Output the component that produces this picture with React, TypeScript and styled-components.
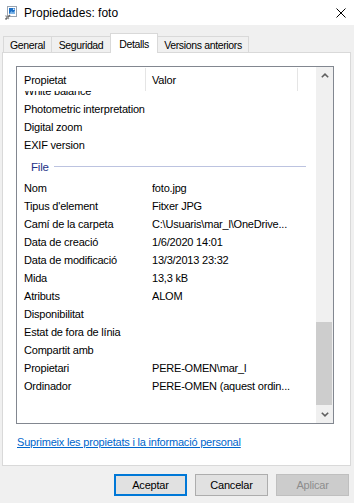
import React from 'react'
import styled, { createGlobalStyle } from 'styled-components'

const GlobalStyle = createGlobalStyle`
  html, body {
    margin: 0;
    padding: 0;
    background: #f0f0f0;
  }
  body {
    font-family: "Liberation Sans", Arial, sans-serif;
    font-size: 11px;
    letter-spacing: -0.2px;
    color: #000;
  }
`

const Window = styled.div`
  width: 354px;
  height: 503px;
  display: flex;
  flex-direction: column;
  overflow: hidden;
  background: #f0f0f0;
`

const TitleBar = styled.div`
  height: 25px;
  background: #fff;
  display: flex;
  align-items: center;
  padding-left: 5px;
`

const Title = styled.span`
  flex: 1;
  font-size: 12px;
  letter-spacing: 0;
  margin-left: 7px;
`

const CloseIcon = styled.svg`
  margin-right: 8px;
`

const Body = styled.div`
  flex: 1;
  display: flex;
  flex-direction: column;
  padding: 8px 3px 0 2px;
`

const TabStrip = styled.div`
  display: flex;
  align-items: flex-end;
  height: 20px;
  padding-left: 1px;
  position: relative;
  z-index: 1;
  margin-bottom: -1px;
`

const Tab = styled.div<{ $w: number; $active?: boolean }>`
  box-sizing: border-box;
  width: ${(p) => p.$w}px;
  height: ${(p) => (p.$active ? 20 : 17)}px;
  margin-left: -1px;
  border: 1px solid #d9d9d9;
  border-bottom: ${(p) => (p.$active ? 'none' : '1px solid #d9d9d9')};
  background: ${(p) => (p.$active ? '#fff' : '#f0f0f0')};
  display: flex;
  align-items: center;
  justify-content: center;
  padding-top: ${(p) => (p.$active ? 0 : 1)}px;
  font-size: 10.5px;
  letter-spacing: -0.35px;
  &:first-child {
    margin-left: 0;
  }
`

const Panel = styled.div`
  box-sizing: border-box;
  height: 414px;
  border: 1px solid #d9d9d9;
  background: #fff;
  padding: 13px 0 0 13px;
  display: flex;
  flex-direction: column;
`

const ListView = styled.div`
  box-sizing: border-box;
  width: 318px;
  height: 358px;
  border: 1px solid #828790;
  display: flex;
  background: #fff;
`

const ListMain = styled.div`
  flex: 1;
  display: flex;
  flex-direction: column;
  overflow: hidden;
`

const Header = styled.div`
  height: 24px;
  display: flex;
  flex-shrink: 0;
  background: #fff;
`

const HeaderCell = styled.div<{ $w?: number; $pad: number }>`
  box-sizing: border-box;
  ${(p) => (p.$w ? `width: ${p.$w}px;` : 'flex: 1;')}
  padding-left: ${(p) => p.$pad}px;
  display: flex;
  align-items: center;
  border-right: ${(p) => (p.$w ? '1px solid #e5e5e5' : 'none')};
  margin: 1px 0 0;
`

const Rows = styled.div`
  flex: 1;
  overflow: hidden;
`

const RowsInner = styled.div`
  margin-top: -9px;
`

const Row = styled.div`
  height: 18px;
  display: flex;
  align-items: center;
  white-space: nowrap;
`

const NameCell = styled.div`
  box-sizing: border-box;
  width: 135px;
  padding-left: 7px;
  flex-shrink: 0;
`

const ValueCell = styled.div`
  flex: 1;
  overflow: hidden;
`

const GroupRow = styled.div`
  height: 25px;
  display: flex;
  align-items: center;
  padding-left: 14px;
  padding-right: 10px;
  color: #1e3287;
  font-size: 11.5px;
`

const GroupLine = styled.div`
  flex: 1;
  height: 1px;
  margin-left: 5px;
  background: #bcc3e0;
`

const ScrollBar = styled.div`
  width: 17px;
  background: #f0f0f0;
  display: flex;
  flex-direction: column;
`

const ArrowButton = styled.div`
  height: 17px;
  display: flex;
  align-items: center;
  justify-content: center;
  flex-shrink: 0;
`

const Track = styled.div`
  flex: 1;
  display: flex;
  flex-direction: column;
  justify-content: flex-end;
  padding-bottom: 1px;
`

const Thumb = styled.div`
  height: 83px;
  margin: 0 1px 0 0;
  background: #cdcdcd;
`

const Link = styled.a`
  margin-top: 12px;
  margin-left: 1px;
  color: #0066cc;
  text-decoration: underline;
  cursor: pointer;
  align-self: flex-start;
`

const Footer = styled.div`
  display: flex;
  justify-content: flex-end;
  gap: 8px;
  padding: 8px 2px 0 0;
`

const Button = styled.button<{ $primary?: boolean }>`
  box-sizing: border-box;
  width: 73px;
  height: 22px;
  margin: 0;
  padding: 0;
  font-family: inherit;
  font-size: 11px;
  letter-spacing: -0.2px;
  color: #000;
  background: #e1e1e1;
  border: ${(p) => (p.$primary ? '2px solid #0078d7' : '1px solid #adadad')};
  &:disabled {
    background: #cccccc;
    border-color: #bfbfbf;
    color: #8c8c8c;
  }
`

const Chevron = ({ up }: { up?: boolean }) => (
  <svg width="8" height="5" viewBox="0 0 8 5">
    <path
      d={up ? 'M0.8 4.3 L4 1.2 L7.2 4.3' : 'M0.8 0.7 L4 3.8 L7.2 0.7'}
      fill="none"
      stroke="#606060"
      strokeWidth="1.6"
    />
  </svg>
)

const FileIcon = () => (
  <svg width="12" height="14" viewBox="0 0 12 14">
    <rect x="2.5" y="0.5" width="9" height="10" fill="#fff" stroke="#9aa4b0" />
    <rect x="4" y="2" width="6" height="6" fill="#1d6fc4" />
    <path d="M4 8 L6.5 5 L8 6.5 L10 4.5 L10 8 Z" fill="#7fb6e8" />
    <rect x="8" y="2.5" width="1.5" height="1.5" fill="#dfeeff" />
    <path d="M0.5 13.5 L5 9" stroke="#6b6b6b" strokeWidth="1.6" />
    <path d="M0.5 9.5 L4 13" stroke="#9a9a9a" strokeWidth="1.2" />
  </svg>
)

const before = ['White balance', 'Photometric interpretation', 'Digital zoom', 'EXIF version']

const fileProps: [string, string][] = [
  ['Nom', 'foto.jpg'],
  ["Tipus d'element", 'Fitxer JPG'],
  ['Camí de la carpeta', 'C:\\Usuaris\\mar_l\\OneDrive...'],
  ['Data de creació', '1/6/2020 14:01'],
  ['Data de modificació', '13/3/2013 23:32'],
  ['Mida', '13,3 kB'],
  ['Atributs', 'ALOM'],
  ['Disponibilitat', ''],
  ['Estat de fora de línia', ''],
  ['Compartit amb', ''],
  ['Propietari', 'PERE-OMEN\\mar_l'],
  ['Ordinador', 'PERE-OMEN (aquest ordin...'],
]

const tabs = [
  { label: 'General', w: 49 },
  { label: 'Seguridad', w: 60 },
  { label: 'Detalls', w: 48, active: true },
  { label: 'Versions anteriors', w: 92 },
]

export default function App() {
  return (
    <>
      <GlobalStyle />
      <Window>
        <TitleBar>
          <FileIcon />
          <Title>Propiedades: foto</Title>
          <CloseIcon width="10" height="10" viewBox="0 0 10 10">
            <path d="M0.5 0.5 L9.5 9.5 M9.5 0.5 L0.5 9.5" stroke="#000" strokeWidth="1" />
          </CloseIcon>
        </TitleBar>
        <Body>
          <TabStrip>
            {tabs.map((t) => (
              <Tab key={t.label} $w={t.w} $active={t.active}>
                {t.label}
              </Tab>
            ))}
          </TabStrip>
          <Panel>
            <ListView>
              <ListMain>
                <Header>
                  <HeaderCell $w={129} $pad={7}>Propietat</HeaderCell>
                  <HeaderCell $w={152} $pad={6}>Valor</HeaderCell>
                  <HeaderCell $pad={0} />
                </Header>
                <Rows>
                  <RowsInner>
                    {before.map((name) => (
                      <Row key={name}>
                        <NameCell>{name}</NameCell>
                        <ValueCell />
                      </Row>
                    ))}
                    <GroupRow>
                      File
                      <GroupLine />
                    </GroupRow>
                    {fileProps.map(([name, value]) => (
                      <Row key={name}>
                        <NameCell>{name}</NameCell>
                        <ValueCell>{value}</ValueCell>
                      </Row>
                    ))}
                  </RowsInner>
                </Rows>
              </ListMain>
              <ScrollBar>
                <ArrowButton>
                  <Chevron up />
                </ArrowButton>
                <Track>
                  <Thumb />
                </Track>
                <ArrowButton>
                  <Chevron />
                </ArrowButton>
              </ScrollBar>
            </ListView>
            <Link>Suprimeix les propietats i la informació personal</Link>
          </Panel>
          <Footer>
            <Button $primary>Aceptar</Button>
            <Button>Cancelar</Button>
            <Button disabled>Aplicar</Button>
          </Footer>
        </Body>
      </Window>
    </>
  )
}
